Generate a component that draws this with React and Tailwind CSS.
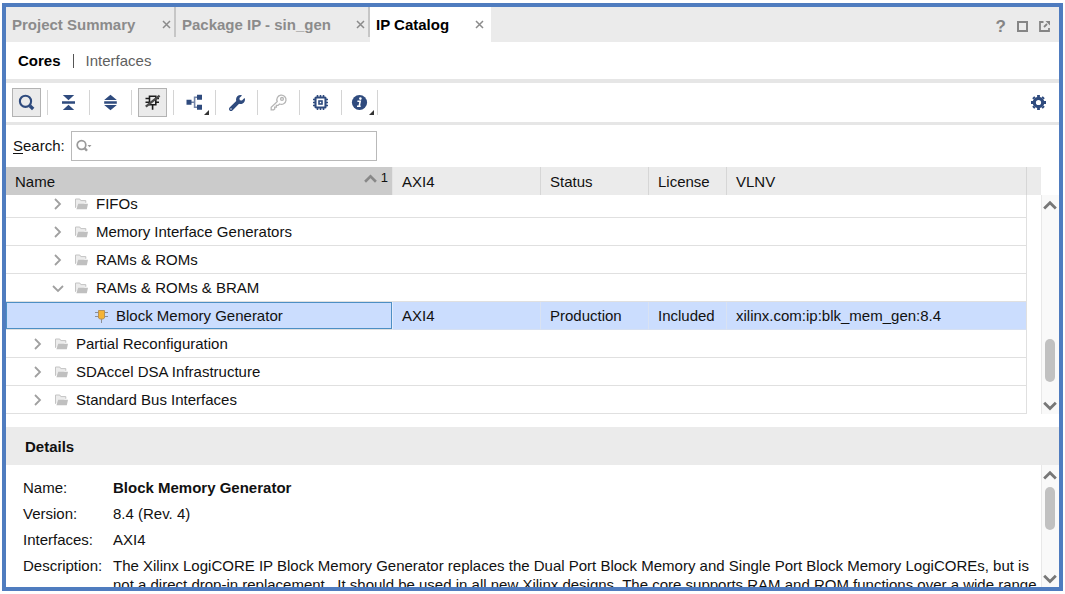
import { useLayoutEffect, useRef } from "react";
import { FaWrench } from "react-icons/fa";

const tabs = [
  { label: "Project Summary", width: "w-[170px]" },
  { label: "Package IP - sin_gen", width: "w-[194px]" },
  { label: "IP Catalog", width: "w-[121px]", active: true },
];

const rows = [
  { name: "FIFOs", level: 2 },
  { name: "Memory Interface Generators", level: 2 },
  { name: "RAMs & ROMs", level: 2 },
  { name: "RAMs & ROMs & BRAM", level: 2, open: true },
  {
    name: "Block Memory Generator",
    level: 3,
    selected: true,
    axi4: "AXI4",
    status: "Production",
    license: "Included",
    vlnv: "xilinx.com:ip:blk_mem_gen:8.4",
  },
  { name: "Partial Reconfiguration", level: 1 },
  { name: "SDAccel DSA Infrastructure", level: 1 },
  { name: "Standard Bus Interfaces", level: 1 },
];

const indent = { 1: "pl-6", 2: "pl-11", 3: "pl-[89px]" };

function CloseIcon() {
  return (
    <svg width="9" height="9" viewBox="0 0 9 9" fill="none" stroke="currentColor" strokeWidth="1.5">
      <path d="M1 1l7 7M8 1L1 8" />
    </svg>
  );
}

function SearchIcon() {
  return (
    <svg width="17" height="17" viewBox="0 0 17 17" fill="none" stroke="currentColor">
      <circle cx="7.5" cy="7.3" r="5.6" strokeWidth="2.1" />
      <path d="M11.8 11.8l3.4 3.2" strokeWidth="3.4" />
    </svg>
  );
}

function CollapseIcon() {
  return (
    <svg width="15" height="17" viewBox="0 0 15 17" fill="currentColor">
      <path d="M1.8 1h11.4L7.5 6.2zM1 7.3h13v2.4H1zM7.5 10.8L13.2 16H1.8z" />
    </svg>
  );
}

function ExpandIcon() {
  return (
    <svg width="15" height="17" viewBox="0 0 15 17" fill="currentColor">
      <path d="M7.5 0.8L13.8 6H1.2zM1.2 7.3h12.6v2.4H1.2zM1.2 11h12.6l-6.3 5.2z" />
    </svg>
  );
}

function PinsOffIcon() {
  return (
    <svg width="17" height="17" viewBox="0 0 17 17" fill="none" stroke="#1c1c1c" strokeWidth="1.6">
      <path d="M5.5 2.2h6.3v8.6H5.5zM1.5 4.5h4M1.5 8.2h4M11.8 4.5h3.2M11.8 8.2h3.2M8.6 10.8v5" />
      <path d="M1.8 12.6L15.6 1.6" stroke="#4a4a4a" strokeWidth="2.4" />
    </svg>
  );
}

function HierarchyIcon() {
  return (
    <svg width="17" height="17" viewBox="0 0 17 17" fill="none">
      <path d="M5 8.2h3.6M12 3.2H8.6v10H12" stroke="#7385a8" strokeWidth="1.6" />
      <path d="M0.5 5.7h5v5h-5zM11 0.8h5v5h-5zM11 10.8h5v5h-5z" fill="currentColor" />
    </svg>
  );
}

function KeyIcon() {
  return (
    <svg width="17" height="17" viewBox="0 0 17 17" fill="none" stroke="#b5b5b5" strokeWidth="1.3">
      <path d="M7.2 7.6A4.6 4.6 0 1 1 9.6 10L8 11.4H6.4v1.7H4.7v1.8L3.6 15.8H1.2v-2.4z" />
      <circle cx="12" cy="4.9" r="1.4" />
    </svg>
  );
}

function ChipIcon() {
  return (
    <svg width="17" height="17" viewBox="0 0 17 17" fill="none" stroke="currentColor">
      <rect x="3.5" y="3.5" width="10" height="10" rx="0.5" strokeWidth="2.1" />
      <rect x="7" y="7" width="3" height="3" strokeWidth="1.6" />
      <path
        d="M5.5 1v2M8.5 1v2M11.5 1v2M5.5 14v2M8.5 14v2M11.5 14v2M1 5.5h2M1 8.5h2M1 11.5h2M14 5.5h2M14 8.5h2M14 11.5h2"
        strokeWidth="1.6"
      />
    </svg>
  );
}

function InfoIcon() {
  return (
    <svg width="17" height="17" viewBox="0 0 17 17">
      <circle cx="8.5" cy="8.5" r="7.6" fill="currentColor" />
      <circle cx="9.4" cy="4.6" r="1.3" fill="#fff" />
      <path d="M6.4 7.2h2.8l-1 5h1.5M6 12.3h2" stroke="#fff" strokeWidth="1.6" fill="none" />
    </svg>
  );
}

function GearIcon() {
  return (
    <svg width="17" height="17" viewBox="0 0 17 17" fill="none" stroke="currentColor">
      <circle cx="8.5" cy="8.5" r="4.2" strokeWidth="3.2" />
      <path
        d="M8.5 3V1M8.5 14v2M3 8.5H1M14 8.5h2M4.6 4.6L3.2 3.2M12.4 12.4l1.4 1.4M4.6 12.4l-1.4 1.4M12.4 4.6l1.4-1.4"
        strokeWidth="2.8"
      />
    </svg>
  );
}

function FolderIcon() {
  return (
    <svg width="13" height="12" viewBox="0 0 13 12">
      <path d="M0.5 9.8V1h4.3l1 1.6h5v2.2" fill="#ececec" stroke="#c4c4c4" strokeWidth="1" />
      <path d="M3.2 5.8H13l-1.2 5.4H1.4z" fill="#c0c0c0" />
    </svg>
  );
}

function CoreIcon() {
  return (
    <svg width="13" height="14" viewBox="0 0 13 14">
      <path d="M0 3.5h13M0 7.5h13M6.5 9v5" stroke="#8c8f96" strokeWidth="1" />
      <path d="M3.5 1.5h6V9L8 10H5L3.5 9z" fill="#f5b335" stroke="#b59257" strokeWidth="1" />
    </svg>
  );
}

function Chevron({ dir, size = 12, thick = 1.8 }) {
  const d = {
    up: "M1 9l5-5 5 5",
    down: "M1 4l5 5 5-5",
    right: "M3 1l5 5-5 5",
  }[dir];
  return (
    <svg width={size} height={size} viewBox="0 0 12 12" fill="none" stroke="currentColor" strokeWidth={thick}>
      <path d={d} />
    </svg>
  );
}

function Tool({ label, pressed, menu, last, children }) {
  return (
    <div className={`flex items-center ${last ? "gap-[3px] pl-[3px]" : "gap-1.5 pl-1.5"}`}>
      <button
        aria-label={label}
        className={`relative flex size-[29px] items-center justify-center ${
          pressed ? "border border-[#b3b3b3] bg-[#ebebeb]" : ""
        }`}
      >
        {children}
        {menu && (
          <svg className="absolute right-0 bottom-0.5" width="5" height="5" viewBox="0 0 5 5">
            <path d="M5 0v5H0z" fill="#333" />
          </svg>
        )}
      </button>
      <span className="h-[25px] w-px bg-[#d4d4d4]" />
    </div>
  );
}

function ScrollTrack({ before, after, className = "" }) {
  return (
    <div className={`flex w-[18px] shrink-0 flex-col items-center border-l border-[#e8e8e8] bg-[#f9f9f9] pr-px text-[#777] ${className}`}>
      <button aria-label="Scroll up" className="flex h-5 items-center">
        <Chevron dir="up" size={14} thick={2.4} />
      </button>
      <span className={before} />
      <span className="h-[43px] w-[10px] shrink-0 rounded-full bg-[#c1c1c1]" />
      <span className={after} />
      <button aria-label="Scroll down" className="flex h-[18px] items-center">
        <Chevron dir="down" size={14} thick={2.4} />
      </button>
    </div>
  );
}

const headCell = "h-7 border-r border-[#d6d6d6] bg-[#ebebeb] pt-0.5 pl-[9px] text-left font-normal";

function CatalogTable() {
  const scroller = useRef(null);
  useLayoutEffect(() => {
    scroller.current.scrollTop = scroller.current.scrollHeight;
  }, []);

  return (
    <div className="flex min-h-0 grow-[247] basis-0">
      <div ref={scroller} className="min-w-0 flex-1 overflow-y-auto [scrollbar-width:none]">
        <table className="w-full table-fixed border-separate border-spacing-0">
          <colgroup>
            <col className="w-[387px]" />
            <col className="w-[148px]" />
            <col className="w-[108px]" />
            <col className="w-[78px]" />
            <col />
            <col className="w-[14px]" />
          </colgroup>
          <thead className="sticky top-0 z-10">
            <tr>
              <th className="h-7 border-r border-[#e4e4e4] bg-[#cbcbcb] pt-0.5 pr-1 pl-[9px] text-left font-normal">
                <div className="flex items-center justify-between">
                  Name
                  <span className="flex items-center gap-1 pb-2 text-[13px] leading-4">
                    <span className="text-[#888]">
                      <Chevron dir="up" size={13} thick={2.4} />
                    </span>
                    1
                  </span>
                </div>
              </th>
              <th className={headCell}>AXI4</th>
              <th className={headCell}>Status</th>
              <th className={headCell}>License</th>
              <th className={headCell}>VLNV</th>
              <td className="bg-[#ebebeb]" />
            </tr>
          </thead>
          <tbody>
            {rows.map((r) => {
              const cell = r.selected
                ? "h-7 border-r border-b border-r-[#d9e2f2] border-b-[#d6e0f2] bg-[#cbddfe] pl-[9px]"
                : "h-7 border-b border-[#e0e0e0] pl-[9px]";
              return (
                <tr key={r.name}>
                  <td
                    className={
                      r.selected
                        ? "h-7 border-r border-b border-r-[#e4ecfb] border-b-[#e0e0e0] bg-[#cbddfe] p-0"
                        : "h-7 border-b border-[#e0e0e0] p-0"
                    }
                  >
                    <div
                      className={`flex h-[27px] items-center ${indent[r.level]} ${
                        r.selected ? "outline outline-1 -outline-offset-1 outline-[#4d8fc4]" : ""
                      }`}
                    >
                      {r.level < 3 && (
                        <button
                          aria-label={r.open ? "Collapse" : "Expand"}
                          className="mr-[9px] flex w-4 justify-center text-[#a0a0a0]"
                        >
                          <Chevron dir={r.open ? "down" : "right"} size={12} />
                        </button>
                      )}
                      {r.level < 3 ? <FolderIcon /> : <CoreIcon />}
                      <span className="pl-2 whitespace-nowrap">{r.name}</span>
                    </div>
                  </td>
                  <td className={cell}>{r.axi4}</td>
                  <td className={cell}>{r.status}</td>
                  <td className={cell}>{r.license}</td>
                  <td className={`${cell} border-r border-r-[#e0e0e0]`}>{r.vlnv}</td>
                  <td />
                </tr>
              );
            })}
          </tbody>
        </table>
      </div>
      <ScrollTrack className="mt-7" before="grow-[125]" after="grow-[14]" />
    </div>
  );
}

function Details() {
  return (
    <section className="flex min-h-0 grow-[160] basis-0 flex-col">
      <h2 className="flex h-[38px] shrink-0 items-center bg-[#ebebeb] pt-0.5 pl-[19px] font-bold">Details</h2>
      <div className="flex min-h-0 flex-1">
        <dl className="grid min-w-0 flex-1 grid-cols-[90px_1fr] content-start gap-y-1.5 overflow-hidden pt-[13px] pl-[17px]">
          <dt>Name:</dt>
          <dd className="font-bold">Block Memory Generator</dd>
          <dt>Version:</dt>
          <dd>8.4 (Rev. 4)</dd>
          <dt>Interfaces:</dt>
          <dd>AXI4</dd>
          <dt>Description:</dt>
          <dd className="leading-[19px]">
            The Xilinx LogiCORE IP Block Memory Generator replaces the Dual Port Block Memory and Single Port Block
            Memory LogiCOREs, but is not a direct drop-in replacement.&nbsp; It should be used in all new Xilinx
            designs. The core supports RAM and ROM functions over a wide range
          </dd>
        </dl>
        <ScrollTrack before="h-0.5" after="grow" />
      </div>
    </section>
  );
}

export default function App() {
  return (
    <div className="h-screen bg-white px-0.5 py-[3px] font-['Liberation_Sans',Arial,sans-serif] text-[15px] leading-5 text-[#111]">
      <main className="flex h-full flex-col overflow-hidden border-4 border-[#4f7cbf]">
        <header className="flex h-[35px] shrink-0 bg-[#ebebeb]">
          <nav className="flex">
            {tabs.map((t) => (
              <div
                key={t.label}
                className={`relative flex items-center justify-between pl-1.5 ${t.width} ${
                  t.active ? "bg-white pr-[7px] text-black" : "pr-[5px] text-[#8b8b8b]"
                }`}
              >
                <button className="font-bold whitespace-nowrap">{t.label}</button>
                <button aria-label={`Close ${t.label}`} className="text-[#8b8b8b]">
                  <CloseIcon />
                </button>
                {!t.active && <span className="absolute top-0 right-0 h-[30px] w-0.5 bg-[#c6c6c6]" />}
              </div>
            ))}
          </nav>
          <div className="ml-auto flex items-center gap-[11px] pt-1 pr-[9px] text-[#858585]">
            <button aria-label="Help" className="text-[17px] font-bold">
              ?
            </button>
            <button aria-label="Maximize">
              <svg width="11" height="11" viewBox="0 0 11 11" fill="none" stroke="currentColor" strokeWidth="2">
                <rect x="1" y="1" width="9" height="9" />
              </svg>
            </button>
            <button aria-label="Float">
              <svg width="11" height="11" viewBox="0 0 11 11" fill="none" stroke="currentColor" strokeWidth="1.8">
                <path d="M4.5 1H1v9h9V7" />
                <path d="M5 6l3-3" />
                <path d="M6.5 0H11v4.5z" fill="currentColor" stroke="none" />
              </svg>
            </button>
          </div>
        </header>

        <div className="flex h-[41px] shrink-0 items-center gap-3 border-b-4 border-[#e6e6e6] pl-3">
          <button className="font-bold text-black">Cores</button>
          <span className="h-3.5 w-px bg-[#555]" />
          <button className="text-[#5f5f5f]">Interfaces</button>
        </div>

        <div className="flex h-[42px] shrink-0 items-center border-b-[3px] border-[#e6e6e6] text-[#2f4b7e]">
          <Tool label="Search" pressed>
            <SearchIcon />
          </Tool>
          <Tool label="Collapse all">
            <CollapseIcon />
          </Tool>
          <Tool label="Expand all">
            <ExpandIcon />
          </Tool>
          <Tool label="Hide incompatible cores" pressed>
            <PinsOffIcon />
          </Tool>
          <Tool label="Group by" menu>
            <HierarchyIcon />
          </Tool>
          <Tool label="Customize">
            <FaWrench size={16} />
          </Tool>
          <Tool label="License status">
            <KeyIcon />
          </Tool>
          <Tool label="Compatible families">
            <ChipIcon />
          </Tool>
          <Tool label="Information" menu last>
            <InfoIcon />
          </Tool>
          <button aria-label="Settings" className="mr-3 ml-auto">
            <GearIcon />
          </button>
        </div>

        <div className="flex h-[42px] shrink-0 items-center gap-1.5 pl-[7px]">
          <label htmlFor="search">
            <span className="underline underline-offset-2">S</span>earch:
          </label>
          <div className="flex h-[30px] w-[306px] items-center gap-0.5 border border-[#b9b9b9] pl-1 text-[#9a9a9a]">
            <svg width="16" height="14" viewBox="0 0 16 14" fill="none" stroke="currentColor">
              <circle cx="5.5" cy="6" r="4.3" strokeWidth="1.7" />
              <path d="M8.6 9.1l2.4 2.6" strokeWidth="2.4" />
              <path d="M11.5 6h4l-2 2.2z" fill="currentColor" stroke="none" />
            </svg>
            <input id="search" type="text" className="min-w-0 flex-1 text-[#111] outline-none" />
          </div>
        </div>

        <CatalogTable />
        <div className="h-[13px] shrink-0" />
        <Details />
      </main>
    </div>
  );
}
